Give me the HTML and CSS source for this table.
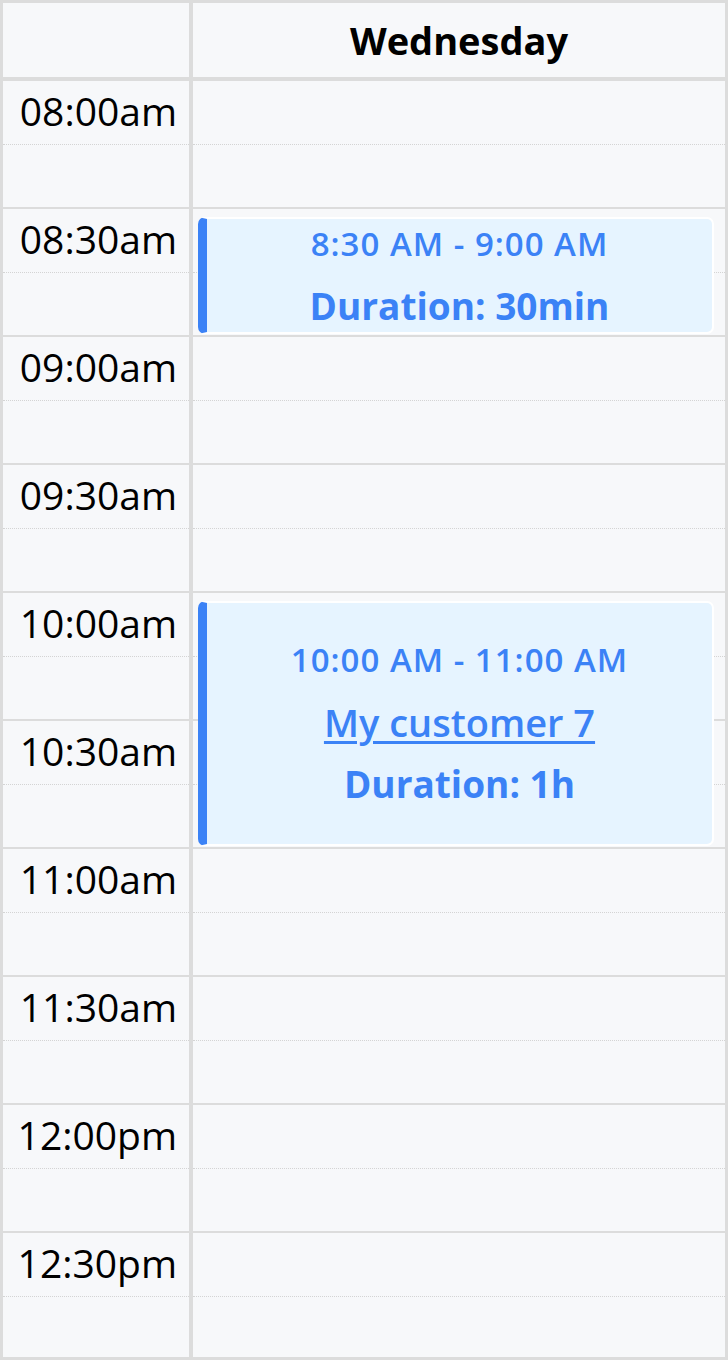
FILE: index.html
```html
<!DOCTYPE html>
<html lang="en">
<head>
<meta charset="utf-8">
<title>Calendar day</title>
<link rel="stylesheet" href="styles.css">
</head>
<body>
<div class="cal">
  <div class="head">
    <div class="corner"></div>
    <div class="dayname">Wednesday</div>
  </div>
  <div class="body">
    <div class="labels">
      <div class="slot"><div class="half"><span class="time">08:00am</span></div></div>
      <div class="slot"><div class="half"><span class="time">08:30am</span></div></div>
      <div class="slot"><div class="half"><span class="time">09:00am</span></div></div>
      <div class="slot"><div class="half"><span class="time">09:30am</span></div></div>
      <div class="slot"><div class="half"><span class="time">10:00am</span></div></div>
      <div class="slot"><div class="half"><span class="time">10:30am</span></div></div>
      <div class="slot"><div class="half"><span class="time">11:00am</span></div></div>
      <div class="slot"><div class="half"><span class="time">11:30am</span></div></div>
      <div class="slot"><div class="half"><span class="time">12:00pm</span></div></div>
      <div class="slot"><div class="half"><span class="time">12:30pm</span></div></div>
    </div>
    <div class="day">
      <div class="slots">
        <div class="slot"><div class="half"></div></div>
        <div class="slot"><div class="half"></div></div>
        <div class="slot"><div class="half"></div></div>
        <div class="slot"><div class="half"></div></div>
        <div class="slot"><div class="half"></div></div>
        <div class="slot"><div class="half"></div></div>
        <div class="slot"><div class="half"></div></div>
        <div class="slot"><div class="half"></div></div>
        <div class="slot"><div class="half"></div></div>
        <div class="slot"><div class="half"></div></div>
      </div>
      <div class="events">
        <div class="event ev-a">
          <div class="ev-time">8:30 AM - 9:00 AM</div>
          <div class="ev-dur">Duration: 30min</div>
        </div>
        <div class="event ev-b">
          <div class="ev-time">10:00 AM - 11:00 AM</div>
          <a class="ev-name" href="#">My customer 7</a>
          <div class="ev-dur">Duration: 1h</div>
        </div>
      </div>
    </div>
  </div>
</div>
</body>
</html>
```
FILE: styles.css
```css
* { box-sizing: border-box; }
html, body { margin: 0; padding: 0; }
body {
  font-family: "Open Sans", "Noto Sans", sans-serif;
  background: #f7f8fa;
  color: #000;
}
.cal {
  width: 728px;
  height: 1360px;
  display: grid;
  grid-template-rows: 74px 1fr;
  row-gap: 4px;
  background: #dcdcdc;
  border: 3px solid #dcdcdc;
}
.head, .body {
  display: grid;
  grid-template-columns: 186px 1fr;
  column-gap: 4px;
}
.corner, .dayname { background: #f7f8fa; }
.dayname {
  display: flex;
  align-items: center;
  justify-content: center;
  font-size: 38px;
  font-weight: 700;
}
.labels, .slots, .events {
  display: grid;
  grid-template-rows: repeat(9, 126px) 124px;
  row-gap: 2px;
}
.day { display: grid; }
.slots, .events { grid-area: 1 / 1; }
.slot { background: #f7f8fa; }
.half {
  height: 64px;
  border-bottom: 1px dotted #d4d4d4;
}
.labels .half {
  text-align: right;
  padding: 4px 12px 0 0;
}
.time {
  font-size: 39px;
  line-height: 52px;
  color: #000;
}
.event {
  grid-column: 1;
  margin: 8px 11px 1px 5px;
  background: #e6f4ff;
  border: 2px solid #fff;
  border-left: 9px solid #3b82f6;
  border-radius: 7px;
  display: flex;
  flex-direction: column;
  align-items: center;
  justify-content: center;
  color: #3b82f6;
  padding-bottom: 4px;
}
.ev-a { grid-row: 2 / 3; }
.ev-b { grid-row: 5 / 7; }
.ev-a .ev-time { padding-top: 3px; }
.ev-time {
  font-size: 33px;
  font-weight: 600;
  letter-spacing: 1px;
  line-height: 62px;
}
.ev-name {
  font-size: 38px;
  font-weight: 600;
  line-height: 62px;
  color: #3b82f6;
  text-decoration: underline;
  text-decoration-thickness: 3px;
  text-underline-offset: 4px;
}
.ev-dur {
  font-size: 37px;
  font-weight: 700;
  line-height: 62px;
}
```
